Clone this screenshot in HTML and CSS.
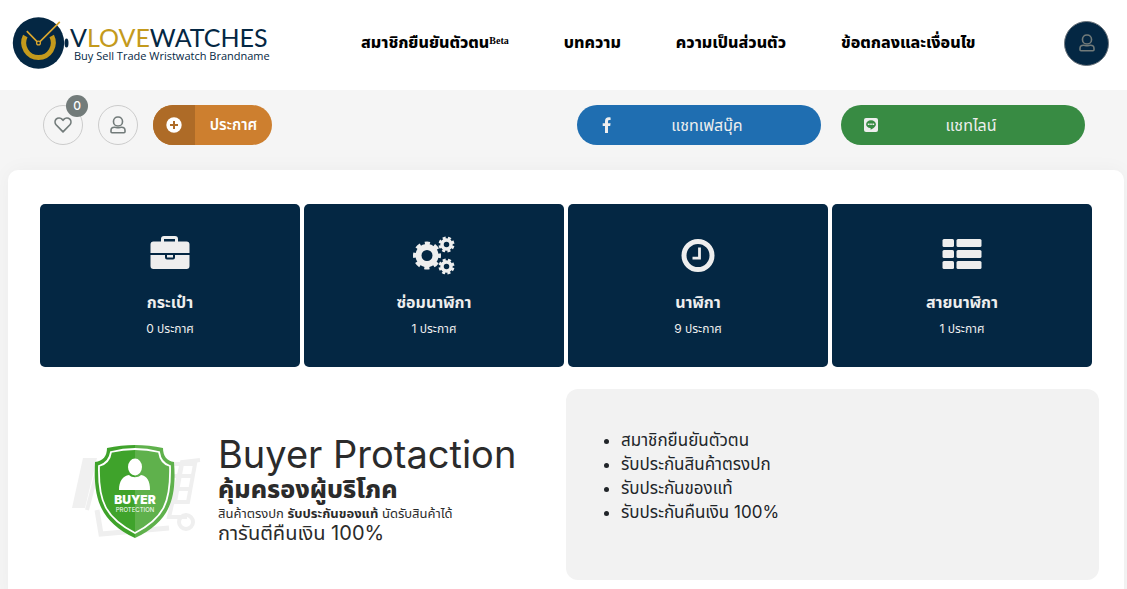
FILE: index.html
```html
<!DOCTYPE html>
<html lang="th">
<head>
    <meta charset="UTF-8">
    <meta name="viewport" content="width=device-width, initial-scale=1">
    <title>VLOVEWATCHES</title>
    <link rel="stylesheet" href="styles.css">
</head>
<body>
    <header class="header">
        <a class="logo" href="#">
            <svg class="logo-watch" viewBox="0 0 58 54" aria-hidden="true">
                <ellipse cx="54.5" cy="27" rx="2" ry="4.5" fill="#042743"/>
                <circle cx="26.5" cy="27" r="25.7" fill="#042743"/>
                <path d="M13.3 20A14.8 14.8 0 1 0 39.7 20" fill="none" stroke="#c49a1c" stroke-width="5"/>
                <path d="M14.8 15.2L26.5 27L47.8 5.8" fill="none" stroke="#d9a62e" stroke-width="1.7"/>
                <circle cx="26.5" cy="27" r="1.9" fill="#042743" stroke="#d9a62e" stroke-width="1.3"/>
            </svg>
            <span class="logo-text">
                <span class="logo-name">V<span class="gold">LOVE</span>WATCHES</span>
                <span class="logo-tag">Buy Sell Trade Wristwatch Brandname</span>
            </span>
        </a>
        <nav class="menu">
            <a href="#">สมาชิกยืนยันตัวตน<sup>Beta</sup></a>
            <a href="#">บทความ</a>
            <a href="#">ความเป็นส่วนตัว</a>
            <a href="#">ข้อตกลงและเงื่อนไข</a>
        </nav>
        <button class="account" type="button" aria-label="บัญชี">
            <svg class="icon-user" viewBox="0 0 16 18" fill="none" stroke="currentColor" stroke-width="1.6"><rect x="3.5" y="1" width="9" height="9" rx="4.3"/><path d="M4.5 11.2C2.3 11.2 1 12.600 1 14.400v1.300c0 .6.400 1 1 1h12c.6 0 1-.4 1-1v-1.300c0-1.800-1.300-3.200-3.500-3.200-1.200 0-2 .6-3.500.6s-2.300-.6-3.500-.6z"/></svg>
        </button>
    </header>

    <div class="toolbar">
        <div class="tools">
            <a class="round" href="#" aria-label="รายการโปรด">
                <svg class="icon-heart" viewBox="0 0 18 16" fill="none" stroke="currentColor" stroke-width="1.7" stroke-linejoin="round"><path d="M9 14.8L2.3 8C.7 6.3.7 3.7 2.2 2.2c1.7-1.7 4.4-1.5 6 .2L9 3.3l.8-.9c1.6-1.7 4.3-1.9 6-.2 1.5 1.5 1.5 4.1-.1 5.8z"/></svg>
                <span class="badge">0</span>
            </a>
            <a class="round" href="#" aria-label="ผู้ใช้">
                <svg class="icon-user" viewBox="0 0 16 18" fill="none" stroke="currentColor" stroke-width="1.6"><rect x="3.5" y="1" width="9" height="9" rx="4.3"/><path d="M4.5 11.2C2.3 11.2 1 12.6 1 14.4v1.3c0 .6.4 1 1 1h12c.6 0 1-.4 1-1v-1.3c0-1.8-1.3-3.2-3.5-3.2-1.2 0-2 .6-3.5.6s-2.3-.6-3.5-.6z"/></svg>
            </a>
            <a class="post" href="#">
                <span class="post-icon">
                    <svg viewBox="0 0 16 16"><circle cx="8" cy="8" r="7.7" fill="#fff"/><path d="M8 4v8M4 8h8" stroke="#ae6b27" stroke-width="2"/></svg>
                </span>
                <span class="post-text">ประกาศ</span>
            </a>
        </div>
        <div class="chats">
            <a class="chat facebook" href="#">
                <svg viewBox="0 0 16 16"><path d="M6 16V9H3.7V6.2H6V4.3C6 1.7 7.4.3 9.7.3c.9 0 1.900.2 1.900.2V3h-1.200C9.3 3 9 3.7 9 4.4v1.8h2.6L11.2 9H9v7z" fill="#eee"/></svg>
                <span>แชทเฟสบุ๊ค</span>
            </a>
            <a class="chat line" href="#">
                <svg viewBox="0 0 16 16"><rect x="1" y="1" width="14" height="14" rx="2" fill="#eee"/><path d="M8 3.2c-2.8 0-4.9 1.8-4.9 4 0 2 1.8 3.6 4.1 3.9.6.1.5.6.4 1.6 2.3-1.2 5.3-3 5.3-5.5 0-2.2-2.1-4-4.9-4z" fill="#388b43"/><path d="M4.8 7.2h6.4" stroke="#eee" stroke-width="1.6" stroke-dasharray="1.3 .4" fill="none"/></svg>
                <span>แชทไลน์</span>
            </a>
        </div>
    </div>

    <main class="panel">
        <div class="cards">
            <a class="card" href="#">
                <svg viewBox="0 0 44 44" fill="#eee"><path fill-rule="evenodd" d="M2.5 18V9.5a3 3 0 0 1 3-3H13V4a3 3 0 0 1 3-3h11a3 3 0 0 1 3 3v2.5h8.500a3 3 0 0 1 3 3V18zM16 6.500h11V4H16z"/><path d="M2.5 20H17v2.5a2 2 0 0 0 2 2h6a2 2 0 0 0 2-2V20h14.5v11a3 3 0 0 1-3 3h-33a3 3 0 0 1-3-3zM19 20h6v2.5h-6z"/></svg>
                <h2>กระเป๋า</h2>
                <p>0 ประกาศ</p>
            </a>
            <a class="card" href="#">
                <svg viewBox="0 0 44 44" fill="none" stroke="#eee">
                    <circle cx="15" cy="20.5" r="8.5" stroke-width="6"/>
                    <circle cx="15" cy="20.5" r="12" stroke-width="4" stroke-dasharray="5 4.425" stroke-dashoffset="2.5"/>
                    <circle cx="34.5" cy="9.5" r="4.5" stroke-width="3.5"/>
                    <circle cx="34.5" cy="9.5" r="6.7" stroke-width="2.6" stroke-dasharray="3 2.262" stroke-dashoffset="4"/>
                    <circle cx="34.5" cy="31.5" r="4.5" stroke-width="3.5"/>
                    <circle cx="34.5" cy="31.5" r="6.7" stroke-width="2.6" stroke-dasharray="3 2.262" stroke-dashoffset="4"/>
                </svg>
                <h2>ซ่อมนาฬิกา</h2>
                <p>1 ประกาศ</p>
            </a>
            <a class="card" href="#">
                <svg viewBox="0 0 44 44" fill="none" stroke="#eee"><circle cx="22" cy="20.5" r="14" stroke-width="5"/><path d="M23.5 12.5v10.7h-7" stroke-width="2.8"/></svg>
                <h2>นาฬิกา</h2>
                <p>9 ประกาศ</p>
            </a>
            <a class="card" href="#">
                <svg viewBox="0 0 44 44" fill="#eee"><rect x="2.5" y="4" width="11.5" height="8" rx="1.5"/><rect x="16.5" y="4" width="25" height="8" rx="1.5"/><rect x="2.5" y="15" width="11.5" height="8" rx="1.5"/><rect x="16.5" y="15" width="25" height="8" rx="1.5"/><rect x="2.5" y="26" width="11.5" height="8" rx="1.5"/><rect x="16.5" y="26" width="25" height="8" rx="1.5"/></svg>
                <h2>สายนาฬิกา</h2>
                <p>1 ประกาศ</p>
            </a>
        </div>

        <div class="protect">
            <section class="buyer">
                <svg class="shield" viewBox="0 0 136 100">
                    <g fill="none" stroke="#efefef">
                        <path d="M13 14h14L15 64H2z" fill="#f0f0f0" stroke="none"/>
                        <path d="M29 20L17 66" stroke-width="4"/>
                        <path d="M27 66l4 24 68-6" stroke-width="5"/>
                        <path d="M130 16l-18 2-13 55h18" stroke-width="4"/>
                        <path d="M100 20h25l-7 38H96M103 32h20M101 45h19M112 20l-7 38" stroke-width="4"/>
                        <circle cx="116" cy="78" r="7" stroke-width="4"/>
                    </g>
                    <path d="M65 1C56 1 46 2 37 4c0 8-4 13-12 14-2 38 6 60 40 76z" fill="#3fa32b"/>
                    <path d="M65 1c9 0 19 1 28 3 0 8 4 13 11 14 3 38-5 60-39 76z" fill="#5fb14c"/>
                    <path d="M65 5c-9 0-16 1-24 3-1 7-5 12-12 14-1 36 7 52 36 67 29-15 36-31 35-67-7-2-10-7-11-14-8-2-15-3-24-3z" fill="none" stroke="#fff" stroke-width="1.8"/>
                    <ellipse cx="65" cy="23" rx="7" ry="8.5" fill="#fff"/>
                    <path d="M49 46c0-9 4-14 10-15 3 3 9 3 12 0 6 1 9 6 9 15z" fill="#fff"/>
                    <text class="shield-name" x="65" y="60" text-anchor="middle">BUYER</text>
                    <text class="shield-sub" x="65" y="68" text-anchor="middle">PROTECTION</text>
                </svg>
                <div class="buyer-text">
                    <h1>Buyer Protaction</h1>
                    <h3>คุ้มครองผู้บริโภค</h3>
                    <p class="small">สินค้าตรงปก <b>รับประกันของแท้</b> นัดรับสินค้าได้</p>
                    <p class="big">การันตีคืนเงิน 100%</p>
                </div>
            </section>
            <ul class="promises">
                <li>สมาชิกยืนยันตัวตน</li>
                <li>รับประกันสินค้าตรงปก</li>
                <li>รับประกันของแท้</li>
                <li>รับประกันคืนเงิน 100%</li>
            </ul>
        </div>
    </main>
</body>
</html>
```
FILE: styles.css
```css
* {
    box-sizing: border-box;
}

body {
    margin: 0;
    font-family: Inter, "Noto Sans Thai", "Noto Sans", sans-serif;
    font-size: 16px;
    line-height: 24px;
    color: #212529;
    background-color: #f5f5f5;
}

a {
    color: inherit;
    text-decoration: none;
}

h1, h2, h3, p, ul {
    margin: 0;
}

svg {
    display: block;
    flex: none;
}

.header {
    display: flex;
    align-items: center;
    height: 90px;
    padding: 0 18px 4px 12px;
    background-color: #fff;
}

.logo {
    display: flex;
    align-items: center;
    width: 349px;
    color: #042743;
}

.logo-watch {
    width: 58px;
    height: 54px;
}

.logo-text {
    display: flex;
    flex-direction: column;
    white-space: nowrap;
}

.logo-name {
    font-family: Lato, sans-serif;
    font-size: 25px;
    line-height: 26px;
    font-weight: 400;
}

.gold {
    color: #c49a1c;
}

.logo-tag {
    padding-left: 4px;
    font-family: "Open Sans", sans-serif;
    font-size: 11px;
    line-height: 12px;
}

.menu {
    display: flex;
    flex: 1;
    gap: 55px;
    padding-bottom: 2px;
    font-weight: 800;
    color: #000;
    white-space: nowrap;
}

.menu sup {
    font-family: "Liberation Serif", serif;
    font-size: 10px;
    line-height: 10px;
    font-weight: 700;
    vertical-align: 4px;
}

.account {
    display: flex;
    align-items: center;
    justify-content: center;
    width: 45px;
    height: 45px;
    padding: 0;
    border: 1px solid #6c757d;
    border-radius: 50%;
    background-color: #042743;
    color: #727b7a;
}

.icon-user {
    width: 16px;
    height: 18px;
}

.icon-heart {
    width: 18px;
    height: 16px;
}

.toolbar {
    display: flex;
    justify-content: space-between;
    padding: 15px 42px 25px 43px;
}

.tools {
    display: flex;
    gap: 15px;
}

.round {
    position: relative;
    display: flex;
    align-items: center;
    justify-content: center;
    width: 40px;
    height: 40px;
    border: 1px solid #ccc;
    border-radius: 50%;
    color: #727b7a;
}

.badge {
    position: absolute;
    top: -11px;
    right: -6px;
    width: 22px;
    height: 22px;
    border-radius: 50%;
    background-color: #727b7a;
    color: #fff;
    font-size: 12px;
    line-height: 22px;
    font-weight: 500;
    text-align: center;
}

.post {
    display: flex;
    width: 119px;
    height: 40px;
    border-radius: 20px;
    overflow: hidden;
    background-color: #cd7f2f;
    color: #fff;
    font-size: 15px;
    font-weight: 600;
    line-height: 40px;
}

.post-icon {
    display: flex;
    align-items: center;
    justify-content: center;
    width: 42px;
    background-color: #ae6b27;
}

.post-icon svg {
    width: 16px;
    height: 16px;
}

.post-text {
    flex: 1;
    text-align: center;
}

.chats {
    display: flex;
    gap: 20px;
}

.chat {
    display: flex;
    align-items: center;
    width: 244px;
    height: 40px;
    padding: 0 22px;
    border-radius: 20px;
    color: #eee;
    font-size: 16px;
}

.chat svg {
    width: 16px;
    height: 16px;
}

.chat span {
    flex: 1;
    text-align: center;
}

.facebook {
    background-color: #1f6eb1;
}

.line {
    background-color: #388b43;
}

.panel {
    margin: 0 3px 0 8px;
    padding: 34px 32px 20px;
    border-radius: 10px;
    background-color: #fff;
    box-shadow: 0 0 20px rgba(0, 0, 0, 0.04);
}

.cards {
    display: grid;
    grid-template-columns: repeat(4, 1fr);
    gap: 4px;
}

.card {
    display: flex;
    flex-direction: column;
    align-items: center;
    padding: 31px 10px 28px;
    border-radius: 5px;
    background-color: #042743;
    color: #eee;
}

.card svg {
    width: 44px;
    height: 44px;
}

.card h2 {
    margin-top: 11px;
    font-size: 16px;
    line-height: 24px;
    font-weight: 700;
}

.card p {
    margin-top: 4px;
    font-size: 12px;
    line-height: 21px;
}

.protect {
    display: grid;
    grid-template-columns: 1fr 1fr;
    margin: 22px -7px 0;
}

.buyer {
    display: flex;
    align-items: center;
    padding: 18px 0 0 37px;
    color: #2b2b2b;
}

.shield {
    width: 136px;
    height: 100px;
}

.shield-name,
.shield-sub {
    font-family: Inter, sans-serif;
    fill: #fff;
}

.shield-name {
    font-size: 12px;
    font-weight: 900;
}

.shield-sub {
    font-size: 6px;
}

.buyer-text {
    margin-left: 12px;
    padding-bottom: 10px;
    white-space: nowrap;
}

.buyer-text h1 {
    font-size: 38px;
    line-height: 40px;
    font-weight: 400;
}

.buyer-text h3 {
    font-size: 25px;
    line-height: 30px;
    font-weight: 800;
}

.small {
    font-size: 13px;
    line-height: 18px;
}

.big {
    font-size: 20px;
    line-height: 22px;
}

.promises {
    min-height: 191px;
    padding: 39px 20px 39px 55px;
    border-radius: 12px;
    background-color: #f2f2f2;
    font-size: 17px;
}
```
